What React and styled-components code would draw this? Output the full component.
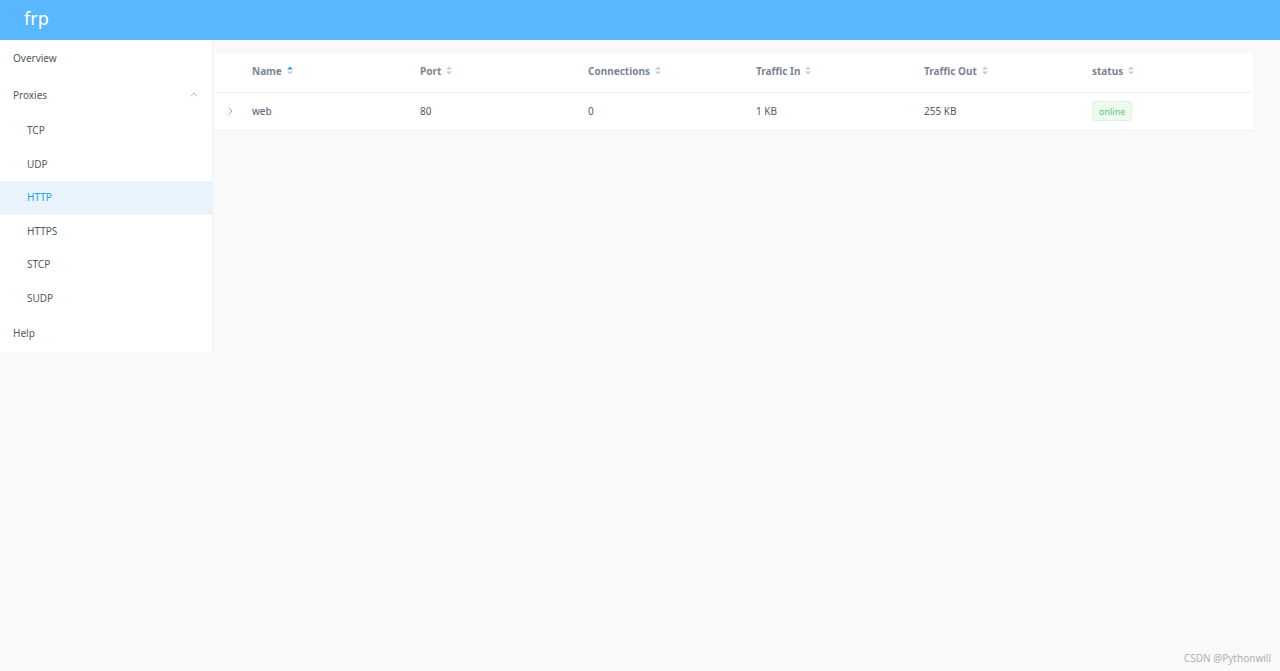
import React from 'react'
import styled, { createGlobalStyle } from 'styled-components'

const colors = {
  header: '#58b7ff',
  page: '#f9f9f9',
  text: '#505a66',
  head: '#7b8592',
  line: '#eef1f6',
  active: '#20a0ff',
}

const columns = ['Name', 'Port', 'Connections', 'Traffic In', 'Traffic Out', 'status']

const proxies = [
  { name: 'web', port: 80, conns: 0, trafficIn: '1 KB', trafficOut: '255 KB', status: 'online' },
]

const submenu = ['TCP', 'UDP', 'HTTP', 'HTTPS', 'STCP', 'SUDP']

const SortIcon = ({ active }) => (
  <svg width="6" height="9" viewBox="0 0 6 9">
    <path d="M0 3.5 L3 0.5 L6 3.5 Z" fill={active ? colors.active : '#c0ccda'} />
    <path d="M0 5.5 L3 8.5 L6 5.5 Z" fill="#c0ccda" />
  </svg>
)

export default function App() {
  return (
    <AppWrapper>
      <GlobalStyle />
      <TopBar>
        <Logo>frp</Logo>
      </TopBar>

      <Body>
        <Sidebar>
          <MenuItem>Overview</MenuItem>
          <MenuItem>
            Proxies
            <svg width="8" height="5" viewBox="0 0 8 5">
              <path d="M0.5 4.5 L4 1 L7.5 4.5" fill="none" stroke="#b4bccc" strokeWidth="1" />
            </svg>
          </MenuItem>
          {submenu.map(item => (
            <SubItem key={item} active={item === 'HTTP'}>{item}</SubItem>
          ))}
          <MenuItem>Help</MenuItem>
        </Sidebar>

        <MainContent>
          <Table>
            <HeadRow>
              <ExpandCell />
              {columns.map((c, i) => (
                <HeadCell key={c}>
                  {c}
                  <SortIcon active={i === 0} />
                </HeadCell>
              ))}
            </HeadRow>
            {proxies.map(p => (
              <Row key={p.name}>
                <ExpandCell>
                  <svg width="5" height="8" viewBox="0 0 5 8">
                    <path d="M0.7 0.7 L4 4 L0.7 7.3" fill="none" stroke="#a4adba" strokeWidth="1" />
                  </svg>
                </ExpandCell>
                <Cell>{p.name}</Cell>
                <Cell>{p.port}</Cell>
                <Cell>{p.conns}</Cell>
                <Cell>{p.trafficIn}</Cell>
                <Cell>{p.trafficOut}</Cell>
                <Cell><Tag>{p.status}</Tag></Cell>
              </Row>
            ))}
          </Table>
        </MainContent>
      </Body>

      <Watermark>CSDN @Pythonwill</Watermark>
    </AppWrapper>
  )
}

// Styles
const GlobalStyle = createGlobalStyle`
  html, body {
    margin: 0;
    padding: 0;
    background: ${colors.page};
    font-family: "Noto Sans", "Open Sans", "Liberation Sans", sans-serif;
  }
`

const AppWrapper = styled.div`
  min-height: 671px;
  position: relative;
`

const TopBar = styled.header`
  height: 40px;
  background-color: ${colors.header};
  display: flex;
  align-items: center;
  padding-left: 24px;
`

const Logo = styled.h1`
  margin: 0;
  color: white;
  font-size: 18px;
  font-weight: 400;
  line-height: 1;
  padding-bottom: 4px;
`

const Body = styled.div`
  display: flex;
  align-items: flex-start;
`

const Sidebar = styled.nav`
  width: 212px;
  flex: none;
  background: white;
  border-right: 1px solid #f0f0f0;
`

const MenuItem = styled.div`
  height: 37px;
  box-sizing: border-box;
  padding: 0 14px 2px 13px;
  display: flex;
  align-items: center;
  justify-content: space-between;
  font-size: 10px;
  color: ${colors.text};
`

const SubItem = styled.div`
  height: 33.5px;
  box-sizing: border-box;
  padding: 0 0 1px 27px;
  display: flex;
  align-items: center;
  font-size: 10px;
  color: ${p => (p.active ? colors.active : colors.text)};
  background: ${p => (p.active ? '#eaf4fe' : 'white')};
`

const MainContent = styled.main`
  flex: 1;
  padding: 13px 27px 0 1px;
`

const Table = styled.div`
  background: white;
  font-size: 10px;
  color: ${colors.text};
`

const HeadRow = styled.div`
  display: grid;
  grid-template-columns: 38px repeat(5, 168px) 1fr;
  height: 40px;
  box-sizing: border-box;
  padding-bottom: 4px;
  align-items: center;
  border-bottom: 1px solid ${colors.line};
`

const Row = styled(HeadRow)`
  height: 38px;
  padding-bottom: 1px;
`

const Cell = styled.div`
  display: flex;
  align-items: center;
`

const ExpandCell = styled(Cell)`
  padding-left: 14px;
`

const HeadCell = styled(Cell)`
  font-weight: 700;
  color: ${colors.head};
  gap: 5px;
`

const Tag = styled.span`
  display: inline-flex;
  align-items: center;
  height: 20px;
  padding: 0 6px;
  border: 1px solid #dcf3df;
  border-radius: 3px;
  background: #eefaf0;
  color: #5fc66e;
  font-size: 9px;
  box-sizing: border-box;
`

const Watermark = styled.div`
  position: absolute;
  right: 9px;
  bottom: 6px;
  font-size: 10px;
  color: #b0b0b0;
`
